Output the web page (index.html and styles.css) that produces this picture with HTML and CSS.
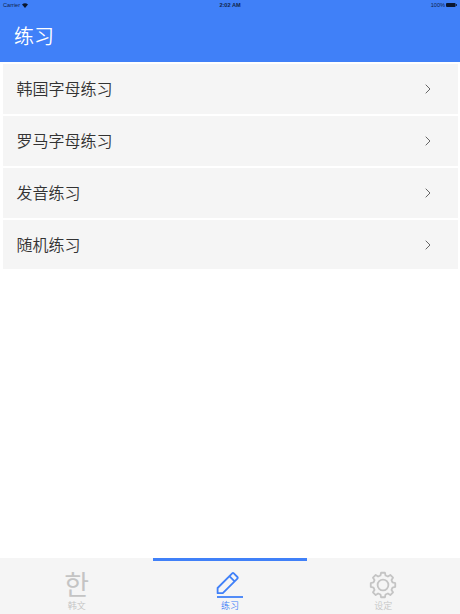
FILE: index.html
```
<!DOCTYPE html>
<html lang="zh-CN">

<head>
    <meta charset="UTF-8">
    <meta name="viewport" content="width=device-width, initial-scale=1.0">
    <title>练习</title>
    <link rel="stylesheet" href="styles.css">
</head>

<body>
    <header>
        <div class="status-bar">
            <span class="carrier">Carrier
                <svg width="6" height="5" viewBox="0 0 6 5"><path d="M0 1.4Q3-.9 6 1.4L3 5z"/></svg>
            </span>
            <span class="time">2:02 AM</span>
            <span class="battery">100%
                <svg width="11" height="4" viewBox="0 0 11 4"><rect width="9.6" height="4" rx="1"/><rect x="10" y="1.2" width="1" height="1.6"/></svg>
            </span>
        </div>
        <h1>练习</h1>
    </header>

    <main>
        <a class="item">韩国字母练习
            <svg class="arrow" viewBox="0 0 6 10"><path d="M.7.7 5 5 .7 9.3"/></svg>
        </a>
        <a class="item">罗马字母练习
            <svg class="arrow" viewBox="0 0 6 10"><path d="M.7.7 5 5 .7 9.3"/></svg>
        </a>
        <a class="item">发音练习
            <svg class="arrow" viewBox="0 0 6 10"><path d="M.7.7 5 5 .7 9.3"/></svg>
        </a>
        <a class="item">随机练习
            <svg class="arrow" viewBox="0 0 6 10"><path d="M.7.7 5 5 .7 9.3"/></svg>
        </a>
    </main>

    <nav>
        <a class="tab">
            <span class="icon hangul" lang="ko">한</span>
            <span class="label">韩文</span>
        </a>
        <a class="tab active">
            <svg class="icon" viewBox="0 0 28 28">
                <path d="M1.6 22.2V17L16.2 2.4Q17 1.6 17.8 2.4L21.4 6Q22.2 6.8 21.4 7.6L6.8 22.2zM13.4 5.2l5.2 5.2"/>
                <path d="M1 26h26"/>
            </svg>
            <span class="label">练习</span>
        </a>
        <a class="tab">
            <svg class="icon" viewBox="-14 -14 28 28">
                <path d="M-1.94-12.25H1.94L2.54-9.47 4.9-8.49 7.29-10.03 10.03-7.29 8.49-4.9 9.47-2.54 12.25-1.94V1.94L9.47 2.54 8.49 4.9 10.03 7.29 7.29 10.03 4.9 8.49 2.54 9.47 1.94 12.25H-1.94L-2.54 9.47-4.9 8.49-7.29 10.03-10.03 7.29-8.49 4.9-9.47 2.54-12.25 1.94V-1.94L-9.47-2.54-8.49-4.9-10.03-7.29-7.29-10.03-4.9-8.49-2.54-9.47z"/>
                <circle r="5.4"/>
            </svg>
            <span class="label">设定</span>
        </a>
    </nav>
</body>

</html>
```

FILE: styles.css
```
* {
    box-sizing: border-box;
}

body {
    display: flex;
    flex-direction: column;
    height: 100vh;
    margin: 0;
    background: white;
    color: #333;
    font-family: "Noto Sans CJK SC", sans-serif;
}

header {
    height: 61.5px;
    background: #4080f8;
}

.status-bar {
    display: grid;
    grid-template-columns: 1fr auto 1fr;
    align-items: center;
    height: 10px;
    padding: 0 3px;
    color: #10254a;
    font: 5.6px/10px "Liberation Sans", sans-serif;
}

.status-bar svg {
    fill: #0b1730;
}

.carrier,
.battery {
    display: flex;
    align-items: center;
    gap: 2px;
}

.battery {
    justify-content: flex-end;
    gap: 1px;
}

.time {
    font-weight: bold;
}

h1 {
    margin: 0;
    padding-left: 14px;
    color: white;
    font-size: 20px;
    font-weight: 350;
    line-height: 51px;
}

main {
    display: flex;
    flex: 1;
    flex-direction: column;
    gap: 2.5px;
    padding: 2.5px 2.5px 0;
}

.item {
    display: flex;
    align-items: center;
    justify-content: space-between;
    height: 49.5px;
    padding: 0 27px 2px 14px;
    background: #f5f5f5;
    font-size: 16px;
    font-weight: 350;
}

.item:last-child {
    height: 48.5px;
    padding-bottom: 1px;
}

.arrow {
    width: 6px;
    height: 10px;
    margin-top: 3px;
    fill: none;
    stroke: #666;
}

nav {
    display: flex;
    height: 56px;
    background: #f5f5f5;
    color: #c4c4c4;
}

.tab {
    display: flex;
    flex: 1;
    flex-direction: column;
    align-items: center;
    padding-top: 10px;
    border-top: 3px solid transparent;
}

.tab.active {
    border-color: #4080f8;
    color: #4080f8;
}

.icon {
    width: 28px;
    height: 28px;
    fill: none;
    stroke: currentColor;
    stroke-width: 1.8;
    stroke-linejoin: round;
}

.hangul {
    font-family: "Noto Sans CJK KR", sans-serif;
    font-size: 27px;
    line-height: 26px;
    text-align: center;
}

.label {
    font-size: 9px;
    font-weight: 350;
    line-height: 13px;
}
```
